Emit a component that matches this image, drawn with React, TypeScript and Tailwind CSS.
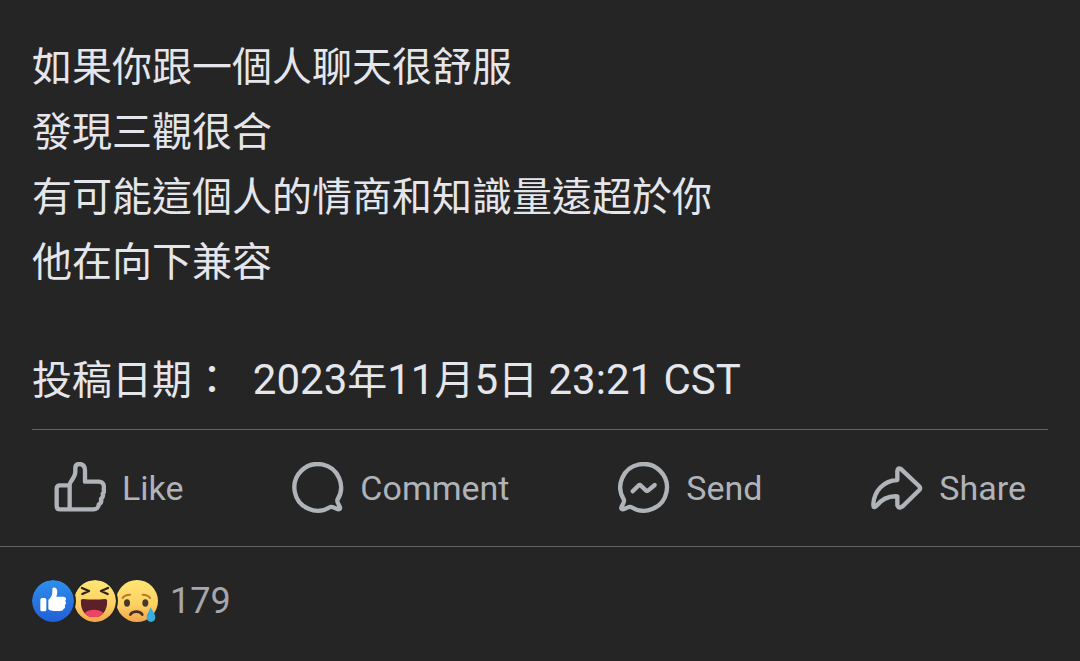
import React from "react";

const lines: string[] = [
  "如果你跟一個人聊天很舒服",
  "發現三觀很合",
  "有可能這個人的情商和知識量遠超於你",
  "他在向下兼容",
];

const LikeIcon: React.FC = () => (
  <svg
    className="w-13 h-13"
    viewBox="0 0 156 156"
    fill="none"
    stroke="currentColor"
    strokeWidth="13"
    strokeLinecap="round"
    strokeLinejoin="round"
    aria-hidden="true"
  >
    <path d="M47 70H18Q8 70 8 80V132Q8 142 18 142H118C128 142 134 136 134 128C141 124 143 118 141 111C147 106 148 100 146 95C151 90 151 86 149 82C152 68 146 59 134 59H93V26C93 12 87 6 76 6C68 6 64 11 64 18V30C64 42 56 50 50 60Q47 65 47 70V142" />
  </svg>
);

const CommentIcon: React.FC = () => (
  <svg
    className="w-13 h-13"
    viewBox="0 0 156 156"
    fill="none"
    stroke="currentColor"
    strokeWidth="13"
    strokeLinejoin="round"
    aria-hidden="true"
  >
    <path d="M136 114A70 70 0 1 0 115 135C122 132 130 141 140 142Q145 142 144 136C143 130 134 122 136 114Z" />
  </svg>
);

const SendIcon: React.FC = () => (
  <svg
    className="w-13 h-13"
    viewBox="0 0 156 156"
    fill="none"
    stroke="currentColor"
    strokeWidth="13"
    strokeLinecap="round"
    strokeLinejoin="round"
    aria-hidden="true"
  >
    <path d="M18 114A70 70 0 1 1 39 135C32 132 24 141 14 142Q9 142 10 136C11 130 20 122 18 114Z" />
    <path d="M44 88L61 71Q65 67 69 71L83 85Q87 89 91 85L110 69" />
  </svg>
);

const ShareIcon: React.FC = () => (
  <svg
    className="w-13 h-13"
    viewBox="0 0 156 156"
    fill="none"
    stroke="currentColor"
    strokeWidth="13"
    strokeLinecap="round"
    strokeLinejoin="round"
    aria-hidden="true"
  >
    <path d="M79 54V27Q80 14 91 22L144 72Q150 78 145 84L96 132Q84 142 79 130V103C50 101 32 112 17 131Q6 142 7 126C10 86 38 56 79 54Z" />
  </svg>
);

const ThumbReaction: React.FC = () => (
  <svg
    className="relative z-20 w-[42px] h-[42px] rounded-full ring-2 ring-[#252526]"
    viewBox="0 0 126 126"
    aria-hidden="true"
  >
    <defs>
      <linearGradient id="thumb-bg" x1="0" y1="0" x2="0" y2="1">
        <stop offset="0" stopColor="#2f8eea" />
        <stop offset="1" stopColor="#2160d8" />
      </linearGradient>
    </defs>
    <circle cx="63" cy="63" r="63" fill="url(#thumb-bg)" />
    <rect x="25" y="54" width="18" height="40" rx="5" fill="#fff" />
    <path
      d="M49 60C58 52 61 46 61 34V27C61 21 73 20 75 30C77 37 75 44 73 50H94C103 50 104 60 99 63C104 67 102 74 98 75C101 80 99 86 94 87C95 91 90 93 84 93H66C58 93 54 91 49 88Z"
      fill="#fff"
    />
  </svg>
);

const HahaReaction: React.FC = () => (
  <svg
    className="relative z-10 w-[42px] h-[42px] rounded-full ring-2 ring-[#252526]"
    viewBox="0 0 126 126"
    aria-hidden="true"
  >
    <defs>
      <linearGradient id="haha-bg" x1="0" y1="0" x2="0" y2="1">
        <stop offset="0" stopColor="#ffe674" />
        <stop offset="0.6" stopColor="#fdd063" />
        <stop offset="1" stopColor="#f3a34c" />
      </linearGradient>
      <clipPath id="haha-mouth">
        <path d="M20 62Q20 57 27 57Q60 60 93 57Q100 57 100 62C100 92 84 112 60 112C36 112 20 92 20 62Z" />
      </clipPath>
    </defs>
    <circle cx="63" cy="63" r="63" fill="url(#haha-bg)" />
    <path
      d="M24 24L45 33L25 42M102 24L81 33L101 42"
      fill="none"
      stroke="#2e2218"
      strokeWidth="7"
      strokeLinecap="round"
      strokeLinejoin="round"
    />
    <g clipPath="url(#haha-mouth)">
      <rect width="126" height="126" fill="#5c2028" />
      <ellipse cx="60" cy="108" rx="32" ry="19" fill="#ee4464" />
    </g>
  </svg>
);

const SadReaction: React.FC = () => (
  <svg className="w-[42px] h-[42px]" viewBox="0 0 126 126" aria-hidden="true">
    <defs>
      <linearGradient id="sad-bg" x1="0" y1="0" x2="0" y2="1">
        <stop offset="0" stopColor="#ffe674" />
        <stop offset="0.6" stopColor="#fdd063" />
        <stop offset="1" stopColor="#f3a34c" />
      </linearGradient>
    </defs>
    <circle cx="63" cy="63" r="63" fill="url(#sad-bg)" />
    <path
      d="M20 54Q26 44 42 44M80 44Q96 44 102 54"
      fill="none"
      stroke="#b5782c"
      strokeWidth="6"
      strokeLinecap="round"
    />
    <ellipse cx="33" cy="69" rx="9" ry="11" fill="#46392c" />
    <ellipse cx="88" cy="69" rx="9" ry="11" fill="#46392c" />
    <path
      d="M43 104C50 92 72 92 79 104"
      fill="none"
      stroke="#46302a"
      strokeWidth="8"
      strokeLinecap="round"
    />
    <path
      d="M104 82C109 93 118 101 118 112C118 121 112 126 105 126C98 126 92 121 92 112C92 101 101 93 104 82Z"
      fill="#36aee2"
    />
  </svg>
);

const actions = [
  { label: "Like", Icon: LikeIcon },
  { label: "Comment", Icon: CommentIcon },
  { label: "Send", Icon: SendIcon },
  { label: "Share", Icon: ShareIcon },
];

const App: React.FC = () => {
  return (
    <main
      lang="zh-Hant"
      className="min-h-screen bg-[#252526] font-[Roboto,'Noto_Sans_CJK_TC',sans-serif]"
    >
      <article className="px-8 pt-[35px]">
        <div className="pb-4 text-[40px] leading-[65px] text-[#e5e6eb]">
          {lines.map((line) => (
            <p key={line}>{line}</p>
          ))}
          <p className="pt-[52px] whitespace-pre-wrap">
            投稿日期：
            <span className="text-[42px]">{"  2023"}</span>年
            <span className="text-[42px]">11</span>月
            <span className="text-[42px]">5</span>日
            <span className="text-[42px]">{" 23:21 CST"}</span>
          </p>
        </div>
        <div className="flex justify-between border-t border-[#626366] px-[22px] py-8">
          {actions.map(({ label, Icon }) => (
            <button
              key={label}
              type="button"
              className="flex items-center gap-4 text-[34px] leading-[52px] text-[#b0b3b8]"
            >
              <Icon />
              {label}
            </button>
          ))}
        </div>
      </article>
      <footer className="flex items-center gap-3 border-t border-[#626366] px-8 py-7">
        <div className="flex">
          <ThumbReaction />
          <HahaReaction />
          <SadReaction />
        </div>
        <span className="text-[36px] leading-[52px] text-[#a5a7ab]">179</span>
      </footer>
    </main>
  );
};

export default App;
